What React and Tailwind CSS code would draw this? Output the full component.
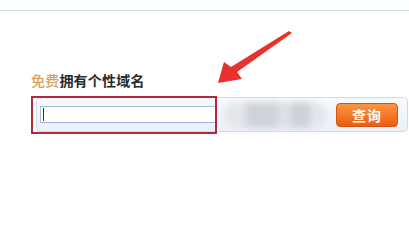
import React from 'react';

const font = { fontFamily: '"Noto Sans CJK SC", "Liberation Sans", sans-serif' };

const Arrow = () => (
  <svg className="absolute left-0 top-0 pointer-events-none" width="409" height="225" viewBox="0 0 409 225">
    <polygon points="289,31 292,33 237,72 242,79 218,83 224,62 231,67" fill="#e8302c" />
  </svg>
);

const App = () => {
  return (
    <div className="relative w-[409px] h-[225px] bg-white overflow-hidden" style={font}>
      <div className="mt-[10px] h-px bg-[#cfe6e6]" />

      <div className="mt-[62px] pl-[31px] text-[14px] leading-[14px] font-bold text-[#2b2b2b] tracking-[0.2px]">
        <span className="text-[#d9a055] font-medium">免费</span>拥有个性域名
      </div>

      <div className="mt-[10px] ml-[36px] w-[372px] h-[35px] flex items-center rounded-[4px] border border-[#cddcec] bg-gradient-to-b from-[#f7fafd] to-[#eaf1f9]">
        <div className="ml-[3px] w-[177px] h-[17px] bg-white border border-[#a7c0cc] border-b-[#9fb4e4] flex items-center">
          <div className="ml-[2px] w-px h-[13px] bg-[#333]" />
        </div>
        <div className="ml-[7px] w-[102px] h-[26px] rounded-full bg-[#d9dde3] blur-[3px] flex overflow-hidden">
          <div className="w-[22px] bg-[#e3e6ea]" />
          <div className="w-[32px] bg-[#cfd3d9]" />
          <div className="w-[14px] bg-[#dde0e5]" />
          <div className="w-[18px] bg-[#cdd1d8]" />
          <div className="flex-1 bg-[#e3e6ea]" />
        </div>
        <button className="ml-[10px] w-[62px] h-[24px] rounded-[4px] border border-[#d4540e] bg-gradient-to-b from-[#fb9440] to-[#ea5d0c] text-white text-[14px] leading-[14px] font-bold flex items-center justify-center tracking-[1px]">
          查询
        </button>
      </div>

      <div className="absolute left-[31px] top-[96px] w-[186px] h-[38px] border-2 border-[#b02a3a]" />
      <Arrow />
    </div>
  );
};

export default App;
